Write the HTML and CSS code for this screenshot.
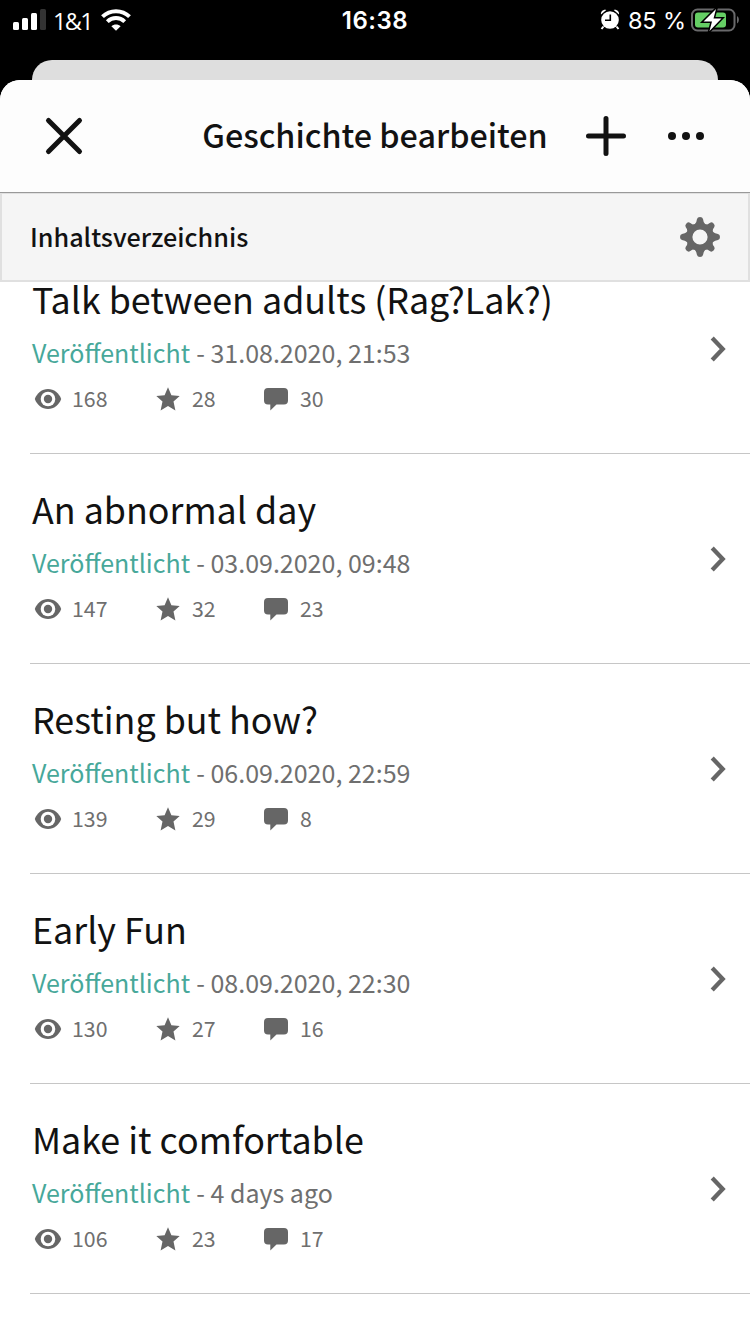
FILE: index.html
```html
<!DOCTYPE html>
<html lang="de">
<head>
<meta charset="utf-8">
<title>Geschichte bearbeiten</title>
<link rel="stylesheet" href="styles.css">
</head>
<body>
<svg class="sprite" aria-hidden="true">
  <symbol id="eye" viewBox="0 0 28 22">
    <path d="M14 1C8 1 3 5 .8 11 3 17 8 21 14 21s11-4 13.200-10C25 5 20 1 14 1z" fill="currentColor"/>
    <circle cx="14" cy="11" r="7.300" fill="#fff"/>
    <circle cx="14" cy="11" r="4.200" fill="currentColor"/>
  </symbol>
  <symbol id="star" viewBox="0 0 24 24">
    <path d="M12 .3l3.400 7.900 8.300.8-6.200 5.600 1.900 8.900L12 19l-7.400 4.500 1.900-8.900L.3 9l8.300-.8z" fill="currentColor"/>
  </symbol>
  <symbol id="comment" viewBox="0 0 24 23">
    <path d="M4 0h16a4 4 0 0 1 4 4v8.500a4 4 0 0 1-4 4h-7.500L6.300 22.500v-6H4a4 4 0 0 1-4-4V4a4 4 0 0 1 4-4z" fill="currentColor"/>
  </symbol>
  <symbol id="chevron" viewBox="0 0 18 26">
    <path d="M2.200 2L12.700 13 2.200 24" fill="none" stroke="currentColor" stroke-width="4.300"/>
  </symbol>
</svg>

<header class="status">
  <div class="status-left">
    <svg class="signal" width="34" height="22" viewBox="0 0 34 22">
      <rect x="0" y="13" width="6" height="8" rx="1.500" fill="#fff"/>
      <rect x="9" y="9" width="6" height="12" rx="1.500" fill="#fff"/>
      <rect x="18" y="4" width="6" height="17" rx="1.500" fill="#fff"/>
      <rect x="27" y="0" width="6" height="21" rx="1.500" fill="#333"/>
    </svg>
    <span class="carrier">1&amp;1</span>
    <svg class="wifi" width="30" height="22" viewBox="0 0 30 22">
      <path d="M1.500 7.700C9 .3 21 .3 28.500 7.700" fill="none" stroke="#fff" stroke-width="4"/>
      <path d="M6.300 12.600c5-4.700 12.400-4.700 17.400 0" fill="none" stroke="#fff" stroke-width="4"/>
      <path d="M15 21.800l-4.600-4.600c2.400-2.400 6.800-2.400 9.200 0z" fill="#fff"/>
    </svg>
  </div>
  <span class="clock">16:38</span>
  <div class="status-right">
    <svg class="alarm" width="20" height="21" viewBox="0 0 20 21">
      <circle cx="10" cy="11" r="8.800" fill="#fff"/>
      <path d="M1 5.500C.5 2.500 3.500 0 6.300 1zM19 5.500c.5-3-2.500-5.500-5.300-4.500z" fill="#fff"/>
      <path d="M3.500 17.500L1.500 20M16.500 17.500l2 2.500" stroke="#fff" stroke-width="2"/>
      <path d="M10.300 5.500V11.300H5" fill="none" stroke="#000" stroke-width="1.600"/>
    </svg>
    <span class="percent">85 %</span>
    <svg class="battery" width="48" height="24" viewBox="0 0 48 24">
      <rect x="1" y="1.500" width="42.500" height="21" rx="5.500" fill="none" stroke="#69696b" stroke-width="2"/>
      <path d="M46 8c2.500 1.500 2.500 6 0 7.500z" fill="#69696b"/>
      <rect x="4" y="4.500" width="31" height="15" rx="3" fill="#65ce64"/>
      <path d="M25 1L12.500 13.500H21L18.500 23 30.500 10.500H22.500z" fill="#fff" stroke="#000" stroke-width="3" paint-order="stroke"/>
    </svg>
  </div>
</header>

<div class="peek"></div>

<main class="sheet">
  <nav class="nav">
    <svg class="close" width="40" height="40" viewBox="0 0 40 40">
      <path d="M4.500 4.500l31 31M35.500 4.500l-31 31" stroke="#121212" stroke-width="5" stroke-linecap="round"/>
    </svg>
    <h1 class="nav-title">Geschichte bearbeiten</h1>
    <svg class="add" width="40" height="40" viewBox="0 0 40 40">
      <path d="M20 2.500v35M2.500 20h35" stroke="#121212" stroke-width="5" stroke-linecap="round"/>
    </svg>
    <svg class="more" width="36" height="8" viewBox="0 0 36 8">
      <circle cx="4" cy="4" r="4"/><circle cx="18" cy="4" r="4"/><circle cx="32" cy="4" r="4"/>
    </svg>
  </nav>

  <section class="contents-bar">
    <h2 class="contents-title">Inhaltsverzeichnis</h2>
    <svg class="gear" width="40" height="40" viewBox="-20 -20 40 40">
      <circle r="10.800" fill="none" stroke="#666" stroke-width="6.400"/>
      <g fill="#666">
        <path id="tooth" d="M-5-13Q-3.300-15-3-18Q-2.500-20 0-20T3-18Q3.300-15 5-13z"/>
        <use href="#tooth" transform="rotate(45) scale(1 .96)"/>
        <use href="#tooth" transform="rotate(90)"/>
        <use href="#tooth" transform="rotate(135) scale(1 .96)"/>
        <use href="#tooth" transform="rotate(180)"/>
        <use href="#tooth" transform="rotate(225) scale(1 .96)"/>
        <use href="#tooth" transform="rotate(270)"/>
        <use href="#tooth" transform="rotate(315) scale(1 .96)"/>
      </g>
    </svg>
  </section>

  <div class="viewport">
    <ul class="chapters">
      <li class="chapter">
        <div class="info">
          <h3 class="title">Talk between adults (Rag?Lak?)</h3>
          <p class="meta"><span class="state">Veröffentlicht</span><span class="date">- 31.08.2020, 21:53</span></p>
          <div class="stats">
            <span class="stat"><svg class="eye"><use href="#eye"/></svg>168</span>
            <span class="stat"><svg class="star"><use href="#star"/></svg>28</span>
            <span class="stat"><svg class="comment"><use href="#comment"/></svg>30</span>
          </div>
        </div>
        <svg class="chevron"><use href="#chevron"/></svg>
      </li>
      <li class="chapter">
        <div class="info">
          <h3 class="title">An abnormal day</h3>
          <p class="meta"><span class="state">Veröffentlicht</span><span class="date">- 03.09.2020, 09:48</span></p>
          <div class="stats">
            <span class="stat"><svg class="eye"><use href="#eye"/></svg>147</span>
            <span class="stat"><svg class="star"><use href="#star"/></svg>32</span>
            <span class="stat"><svg class="comment"><use href="#comment"/></svg>23</span>
          </div>
        </div>
        <svg class="chevron"><use href="#chevron"/></svg>
      </li>
      <li class="chapter">
        <div class="info">
          <h3 class="title">Resting but how?</h3>
          <p class="meta"><span class="state">Veröffentlicht</span><span class="date">- 06.09.2020, 22:59</span></p>
          <div class="stats">
            <span class="stat"><svg class="eye"><use href="#eye"/></svg>139</span>
            <span class="stat"><svg class="star"><use href="#star"/></svg>29</span>
            <span class="stat"><svg class="comment"><use href="#comment"/></svg>8</span>
          </div>
        </div>
        <svg class="chevron"><use href="#chevron"/></svg>
      </li>
      <li class="chapter">
        <div class="info">
          <h3 class="title">Early Fun</h3>
          <p class="meta"><span class="state">Veröffentlicht</span><span class="date">- 08.09.2020, 22:30</span></p>
          <div class="stats">
            <span class="stat"><svg class="eye"><use href="#eye"/></svg>130</span>
            <span class="stat"><svg class="star"><use href="#star"/></svg>27</span>
            <span class="stat"><svg class="comment"><use href="#comment"/></svg>16</span>
          </div>
        </div>
        <svg class="chevron"><use href="#chevron"/></svg>
      </li>
      <li class="chapter">
        <div class="info">
          <h3 class="title">Make it comfortable</h3>
          <p class="meta"><span class="state">Veröffentlicht</span><span class="date">- 4 days ago</span></p>
          <div class="stats">
            <span class="stat"><svg class="eye"><use href="#eye"/></svg>106</span>
            <span class="stat"><svg class="star"><use href="#star"/></svg>23</span>
            <span class="stat"><svg class="comment"><use href="#comment"/></svg>17</span>
          </div>
        </div>
        <svg class="chevron"><use href="#chevron"/></svg>
      </li>
    </ul>
  </div>
</main>
</body>
</html>
```
FILE: styles.css
```css
* { box-sizing: border-box; }
html, body { margin: 0; height: 100%; }
body {
  display: flex;
  flex-direction: column;
  overflow: hidden;
  background: #000;
  color: #121212;
  font-family: "Noto Sans CJK JP", "Noto Sans", sans-serif;
}
h1, h2, h3, p, ul { margin: 0; padding: 0; }
svg { display: block; flex: none; }
.sprite { display: none; }

/* Status bar */
.status {
  height: 60px;
  flex: none;
  display: grid;
  grid-template-columns: 1fr auto 1fr;
  align-items: start;
  padding: 8px 11px 0 13px;
  color: #fff;
  font-family: Inter, "Liberation Sans", sans-serif;
  font-size: 24px;
  line-height: 26px;
}
.status-left, .status-right { display: flex; }
.signal { margin-top: 1px; }
.carrier {
  width: 41px;
  margin-left: 6px;
  font-family: "Open Sans", sans-serif;
  font-size: 23.5px;
  font-weight: 400;
  letter-spacing: -1.6px;
  white-space: nowrap;
}
.wifi { margin: 1px 0 0 7px; }
.clock { margin-left: -2px; font-weight: 600; letter-spacing: 0.5px; }
.status-right { justify-content: flex-end; }
.alarm { margin-top: 1px; }
.percent { margin: 0 5px 0 8px; font-size: 23.5px; letter-spacing: -0.1px; }

/* Stacked sheets */
.peek {
  height: 20px;
  flex: none;
  margin: 0 32px;
  background: #dedede;
  border-radius: 20px 20px 0 0;
}
.sheet {
  flex: 1;
  min-height: 0;
  display: flex;
  flex-direction: column;
  background: #fff;
  border-radius: 20px 20px 0 0;
  overflow: hidden;
}
.nav {
  height: 113px;
  flex: none;
  display: flex;
  align-items: center;
  padding: 0 46px 0 44px;
  background: #fdfdfd;
  border-bottom: 1px solid #999;
}
.nav-title {
  flex: 1;
  margin: 0 -4px 0 -2px;
  padding: 0 0 4px 78px;
  text-align: center;
  font-size: 32.3px;
  font-weight: 500;
  line-height: 48px;
  white-space: nowrap;
}
.add { margin-right: 42px; }
.more { fill: #121212; }

.contents-bar {
  height: 89px;
  flex: none;
  display: flex;
  align-items: center;
  justify-content: space-between;
  padding: 0 28px;
  background: #f5f5f5;
  border: 2px solid #e0e0e0;
  border-top-width: 1px;
}
.contents-title {
  padding-bottom: 3px;
  font-size: 25.2px;
  font-weight: 500;
  line-height: 36px;
}

/* Chapter list */
.viewport { flex: 1; min-height: 0; overflow: hidden; }
.chapters { list-style: none; margin: -38px 0 0 30px; }
.chapter {
  height: 210px;
  display: flex;
  justify-content: space-between;
  padding: 29px 22px 0 2px;
  border-bottom: 1px solid #c6c6c6;
}
.title { font-size: 35.85px; font-weight: 400; line-height: 50px; white-space: nowrap; }
.meta {
  display: flex;
  gap: 6px;
  margin-top: 9px;
  font-size: 25.02px;
  line-height: 40px;
  white-space: nowrap;
  color: #6f6f6f;
}
.state { color: #47a89a; }
.stats {
  display: grid;
  grid-template-columns: 120px 108px auto;
  margin-top: 11px;
  padding-left: 2px;
  font-size: 21.3px;
  line-height: 30px;
  color: #6f6f6f;
}
.stat { display: flex; align-items: center; }
.stat svg { color: #666; }
.eye { width: 28px; height: 22px; margin-right: 10px; margin-top: 1px; }
.star { width: 24px; height: 24px; margin: 2px 12px 0 2px; }
.comment { width: 24px; height: 23px; margin: 3px 12px 0 2px; }
.chevron { width: 18px; height: 26px; margin-top: 63px; color: #666; }
```
